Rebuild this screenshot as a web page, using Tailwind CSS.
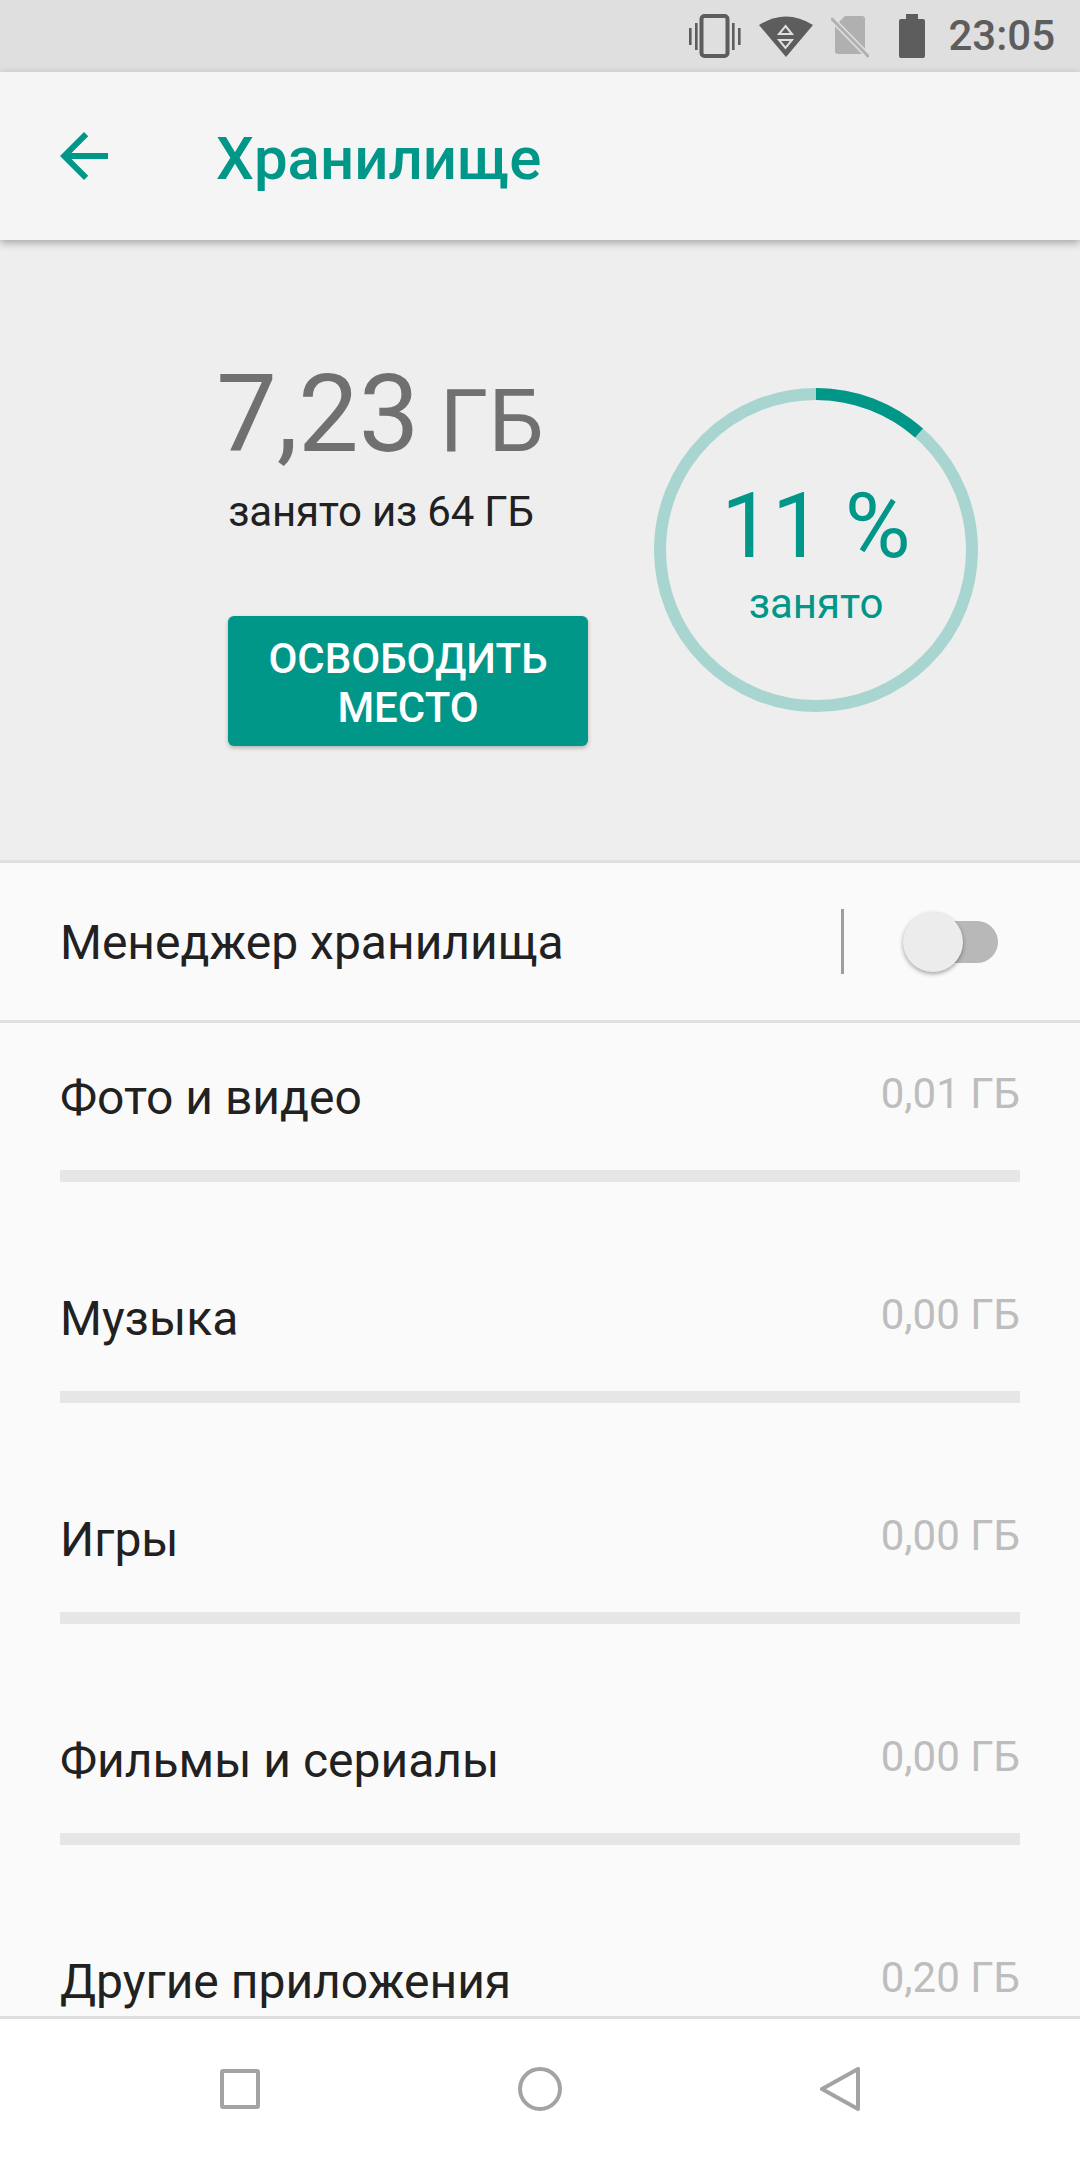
<!DOCTYPE html>
<html lang="ru">
<head>
<meta charset="utf-8">
<script src="https://cdn.jsdelivr.net/npm/@tailwindcss/browser@4"></script>
</head>
<body class="m-0">
<div class="w-[1080px] h-[2160px] flex flex-col overflow-hidden bg-[#fafafa] font-['Roboto',sans-serif]">
  <!-- status bar -->
  <div class="h-[72px] shrink-0 bg-[#dfdfdf] flex items-center justify-end pr-[25px]">
    <svg class="w-[54px] h-[44px] mr-[17px]" viewBox="0 0 54 44" fill="#5d5d5d"><rect x="13.500" y="2" width="26" height="40" rx="3" fill="none" stroke="#5d5d5d" stroke-width="4"/><rect x="1" y="14" width="2.600" height="17"/><rect x="7" y="9" width="2.600" height="27"/><rect x="44" y="9" width="2.600" height="27"/><rect x="50" y="14" width="2.600" height="17"/></svg>
    <svg class="w-[54px] h-[44px] mr-[18px]" viewBox="0 0 54 44"><path d="M0 11 Q27 -6 54 11 L27 43 Z" fill="#5d5d5d"/><path d="M26.500 12 L33 20 H20 Z M20 26 H33 L26.500 34 Z" fill="none" stroke="#dfdfdf" stroke-width="2"/></svg>
    <svg class="w-[38px] h-[44px] mr-[30px]" viewBox="0 0 38 44"><path d="M14 2 H31 a3 3 0 0 1 3 3 V37 a3 3 0 0 1 -3 3 H7 a3 3 0 0 1 -3 -3 V12 Z" fill="#b0b0b0"/><path d="M-1 3 L35 40" stroke="#dfdfdf" stroke-width="6"/><path d="M1 5 L37 42" stroke="#b0b0b0" stroke-width="3" stroke-linecap="round"/></svg>
    <svg class="w-[26px] h-[44px] mr-[23px]" viewBox="0 0 26 44" fill="#5d5d5d"><rect x="7" y="0" width="12" height="6"/><rect x="0" y="5" width="26" height="39" rx="2"/></svg>
    <span class="text-[42px] leading-none font-medium text-[#5d5d5d]">23:05</span>
  </div>
  <!-- app bar -->
  <div class="h-[168px] shrink-0 bg-[#f5f5f5] flex items-center relative z-10 shadow-[0_3px_8px_rgba(0,0,0,0.3)]">
    <svg class="w-[72px] h-[72px] ml-[48px]" viewBox="0 0 24 24" fill="#009688"><path d="M20 11H7.830l5.590-5.590L12 4l-8 8 8 8 1.410-1.410L7.830 13H20v-2z"/></svg>
    <span class="ml-[96px] pt-[6px] text-[60px] font-medium text-[#009688] leading-none">Хранилище</span>
  </div>
  <!-- summary -->
  <div class="h-[623px] shrink-0 bg-[#eeeeee] border-b-[3px] border-[#e0e0e0] flex pl-[228px]">
    <div class="w-[360px] flex flex-col items-start pt-[114px]">
      <div class="w-[304px] flex flex-col items-center">
        <div class="h-[120px] leading-[120px] whitespace-nowrap text-[#707070]"><span class="text-[108px]">7,23</span><span class="text-[88px] ml-[20px]">ГБ</span></div>
        <div class="mt-[13px] ml-[2px] text-[42px] tracking-[-0.2px] leading-[50px] whitespace-nowrap text-[#212121]">занято из 64 ГБ</div>
      </div>
      <div class="mt-[79px] w-[360px] h-[130px] pt-[4px] rounded-[6px] bg-[#009688] shadow-[0_2px_4px_rgba(0,0,0,0.25)] flex items-center justify-center text-center text-white font-medium text-[42px] leading-[49px]">ОСВОБОДИТЬ<br>МЕСТО</div>
    </div>
    <div class="ml-[66px] mt-[148px] w-[324px] h-[324px] relative flex flex-col items-center">
      <svg class="absolute inset-0 w-[324px] h-[324px]" viewBox="0 0 324 324" fill="none"><circle cx="162" cy="162" r="156" stroke="#a8d5d0" stroke-width="12"/><path d="M162 6 A156 156 0 0 1 265 45" stroke="#009688" stroke-width="12"/></svg>
      <div class="mt-[89px] text-[90px] leading-[100px] text-[#009688] whitespace-nowrap">11 %</div>
      <div class="mt-[3px] text-[42px] leading-[48px] text-[#009688]">занято</div>
    </div>
  </div>
  <!-- storage manager -->
  <div class="h-[160px] shrink-0 bg-[#fafafa] border-b-[3px] border-[#e0e0e0] flex items-center pl-[60px] relative">
    <span class="pt-[2px] text-[48px] text-[#212121]">Менеджер хранилища</span>
    <div class="ml-auto w-[3px] h-[65px] bg-[#9e9e9e] mr-[58px]"></div>
    <div class="relative w-[96px] h-[60px] mr-[82px] flex items-center">
      <div class="ml-[12px] w-[84px] h-[42px] rounded-full bg-[#b8b8b8]"></div>
      <div class="absolute left-[1px] top-0 w-[60px] h-[60px] rounded-full bg-[#ececec] shadow-[0_2px_4px_rgba(0,0,0,0.35)]"></div>
    </div>
  </div>
  <!-- list -->
  <div class="flex-1 overflow-hidden bg-[#fafafa] px-[60px]">
    <div class="h-[221px] flex flex-col pt-[44px]">
      <div class="flex justify-between h-[60px]"><span class="pt-[1px] text-[48px] leading-[60px] text-[#212121]">Фото и видео</span><span class="pt-[2px] text-[42px] leading-[50px] text-[#bdbdbd]">0,01 ГБ</span></div>
      <div class="mt-[43px] h-[12px] bg-[#e6e6e6]"></div>
    </div>
    <div class="h-[221px] flex flex-col pt-[44px]">
      <div class="flex justify-between h-[60px]"><span class="pt-[1px] text-[48px] leading-[60px] text-[#212121]">Музыка</span><span class="pt-[2px] text-[42px] leading-[50px] text-[#bdbdbd]">0,00 ГБ</span></div>
      <div class="mt-[43px] h-[12px] bg-[#e6e6e6]"></div>
    </div>
    <div class="h-[221px] flex flex-col pt-[44px]">
      <div class="flex justify-between h-[60px]"><span class="pt-[1px] text-[48px] leading-[60px] text-[#212121]">Игры</span><span class="pt-[2px] text-[42px] leading-[50px] text-[#bdbdbd]">0,00 ГБ</span></div>
      <div class="mt-[43px] h-[12px] bg-[#e6e6e6]"></div>
    </div>
    <div class="h-[221px] flex flex-col pt-[44px]">
      <div class="flex justify-between h-[60px]"><span class="pt-[1px] text-[48px] leading-[60px] text-[#212121]">Фильмы и сериалы</span><span class="pt-[2px] text-[42px] leading-[50px] text-[#bdbdbd]">0,00 ГБ</span></div>
      <div class="mt-[43px] h-[12px] bg-[#e6e6e6]"></div>
    </div>
    <div class="h-[221px] flex flex-col pt-[44px]">
      <div class="flex justify-between h-[60px]"><span class="pt-[1px] text-[48px] leading-[60px] text-[#212121]">Другие приложения</span><span class="pt-[2px] text-[42px] leading-[50px] text-[#bdbdbd]">0,20 ГБ</span></div>
    </div>
  </div>
  <!-- nav bar -->
  <div class="h-[144px] shrink-0 bg-white border-t-[3px] border-[#dedede] flex items-center pb-[2px]">
    <svg class="ml-[220px] w-[40px] h-[40px]" viewBox="0 0 40 40" fill="none"><rect x="2" y="2" width="36" height="36" rx="1" stroke="#a3a3a3" stroke-width="4"/></svg>
    <svg class="ml-[258px] w-[44px] h-[44px]" viewBox="0 0 44 44" fill="none"><circle cx="22" cy="22" r="20" stroke="#a3a3a3" stroke-width="4"/></svg>
    <svg class="ml-[258px] w-[40px] h-[44px]" viewBox="0 0 40 44" fill="none"><path d="M38 2 V42 L2 22 Z" stroke="#a3a3a3" stroke-width="4" stroke-linejoin="round"/></svg>
  </div>
</div>
</body>
</html>
